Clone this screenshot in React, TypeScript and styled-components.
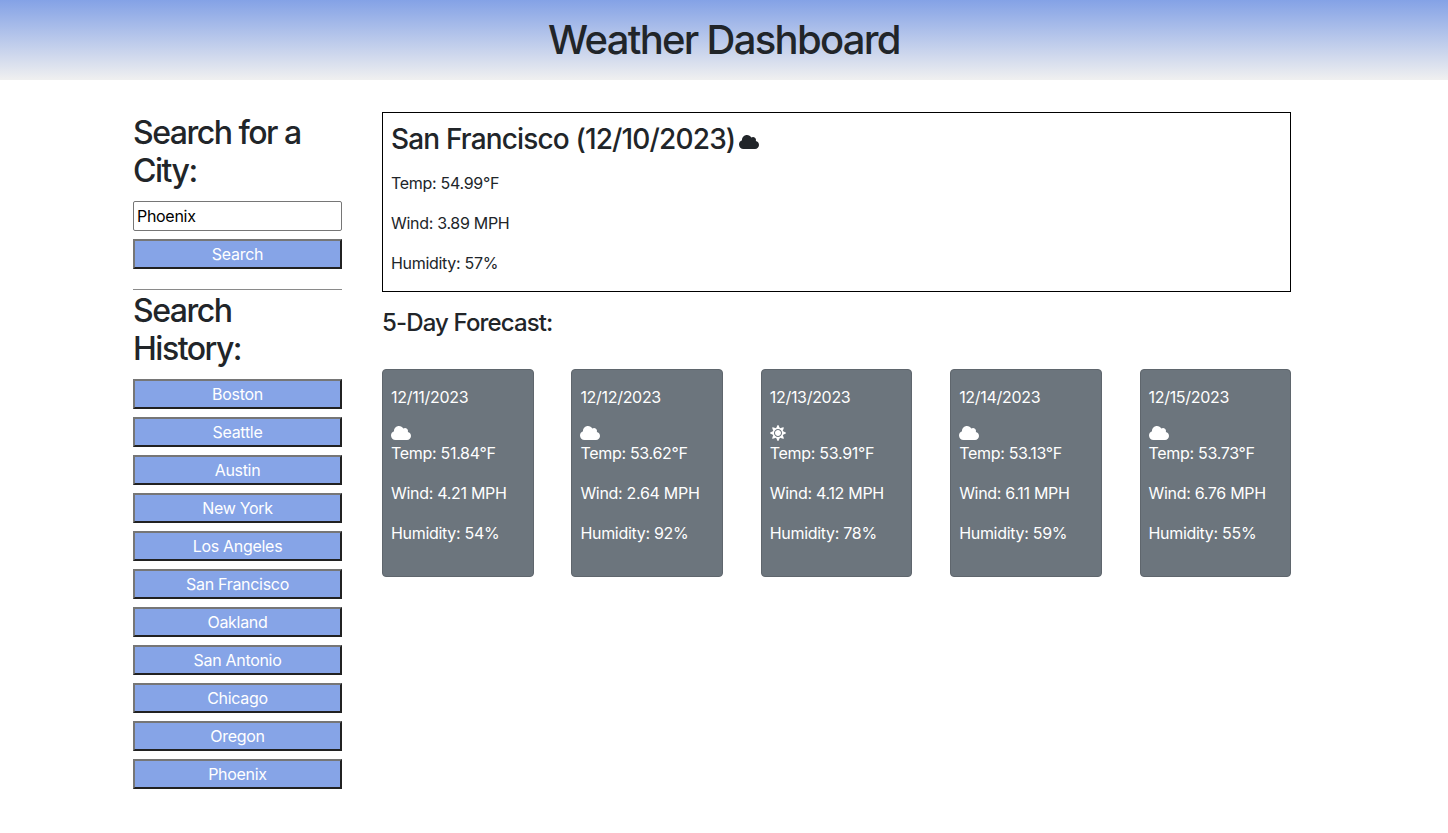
import React from 'react';
import styled, { createGlobalStyle } from 'styled-components';
import { FaCloud, FaSun } from 'react-icons/fa';

const GlobalStyle = createGlobalStyle`
    * {
        box-sizing: border-box;
    }
    body {
        margin: 0;
        background: #fff;
        color: #212529;
        font-family: Inter, "Liberation Sans", sans-serif;
        font-size: 16px;
        line-height: 1.5;
        letter-spacing: -0.3px;
    }
`

const Header = styled.header`
    height: 80px;
    display: flex;
    justify-content: center;
    align-items: center;
    background: linear-gradient(#84a2e6, #f0f0f0);
`

const Title = styled.h1`
    margin: 0;
    font-size: 40px;
    font-weight: 500;
    line-height: 1.2;
    letter-spacing: -1.7px;
`

const Page = styled.div`
    display: flex;
    gap: 40px;
    padding: 32px 0 0 133px;
`

const Sidebar = styled.aside`
    width: 209px;
    flex-shrink: 0;
    display: flex;
    flex-direction: column;
    padding-top: 2px;
`

const SideHeading = styled.h3`
    margin: 0 0 10px;
    font-size: 32px;
    font-weight: 500;
    line-height: 1.2;
    letter-spacing: -1.5px;
`

const CityInput = styled.input`
    height: 30px;
    width: 100%;
    padding: 0 3px;
    border: 1px solid #767676;
    border-radius: 2px;
    color: #000;
    font: inherit;
    letter-spacing: inherit;
    margin-bottom: 8px;
`

const SideButton = styled.button`
    height: 30px;
    width: 100%;
    flex-shrink: 0;
    padding: 0;
    border-width: 2px;
    border-style: solid;
    border-color: #767676 #212121 #212121 #767676;
    background: #86a4e7;
    color: #fff;
    font: inherit;
    letter-spacing: inherit;
    margin-bottom: 8px;
`

const Divider = styled.hr`
    width: 100%;
    margin: 12px 0 2px;
    border: 0;
    border-top: 1px solid #8a8a8a;
`

const Main = styled.main`
    width: 909px;
    flex-shrink: 0;
`

const CurrentBox = styled.section`
    height: 180px;
    padding: 10px 8px 0;
    border: 1px solid #000;
`

const CurrentTitle = styled.h2`
    margin: 0 0 14px;
    font-size: 28px;
    font-weight: 500;
    line-height: 1.2;
    letter-spacing: -0.85px;

    svg {
        font-size: 20px;
        margin-left: -3px;
        vertical-align: -3px;
    }
`

const Stat = styled.p`
    margin: 0 0 16px;
`

const ForecastHeading = styled.h4`
    margin: 17px 0 31px;
    font-size: 24px;
    font-weight: 500;
    line-height: 1.2;
    letter-spacing: -0.87px;
`

const CardRow = styled.div`
    display: flex;
    justify-content: space-between;
`

const Card = styled.div`
    width: 151.5px;
    height: 208px;
    padding: 15px 8px;
    border: 1px solid #5f666d;
    border-radius: 4px;
    background: #6c757d;
    color: #fff;
`

const CardIcon = styled.div`
    height: 16px;
    display: flex;
    align-items: center;
`

const history = [
    'Boston',
    'Seattle',
    'Austin',
    'New York',
    'Los Angeles',
    'San Francisco',
    'Oakland',
    'San Antonio',
    'Chicago',
    'Oregon',
    'Phoenix',
]

const forecast = [
    { date: '12/11/2023', sunny: false, temp: '51.84', wind: '4.21', humidity: 54 },
    { date: '12/12/2023', sunny: false, temp: '53.62', wind: '2.64', humidity: 92 },
    { date: '12/13/2023', sunny: true, temp: '53.91', wind: '4.12', humidity: 78 },
    { date: '12/14/2023', sunny: false, temp: '53.13', wind: '6.11', humidity: 59 },
    { date: '12/15/2023', sunny: false, temp: '53.73', wind: '6.76', humidity: 55 },
]

function App() {
    return (
        <>
            <GlobalStyle />
            <Header>
                <Title>Weather Dashboard</Title>
            </Header>

            <Page>
                <Sidebar>
                    <SideHeading>Search for a City:</SideHeading>
                    <CityInput defaultValue="Phoenix" />
                    <SideButton>Search</SideButton>
                    <Divider />
                    <SideHeading>Search History:</SideHeading>
                    {history.map((city) => (
                        <SideButton key={city}>{city}</SideButton>
                    ))}
                </Sidebar>

                <Main>
                    <CurrentBox>
                        <CurrentTitle>San Francisco (12/10/2023) <FaCloud /></CurrentTitle>
                        <Stat>Temp: 54.99°F</Stat>
                        <Stat>Wind: 3.89 MPH</Stat>
                        <Stat>Humidity: 57%</Stat>
                    </CurrentBox>

                    <ForecastHeading>5-Day Forecast:</ForecastHeading>

                    <CardRow>
                        {forecast.map((day) => (
                            <Card key={day.date}>
                                <Stat>{day.date}</Stat>
                                <CardIcon>{day.sunny ? <FaSun /> : <FaCloud size={20} />}</CardIcon>
                                <Stat>Temp: {day.temp}°F</Stat>
                                <Stat>Wind: {day.wind} MPH</Stat>
                                <Stat>Humidity: {day.humidity}%</Stat>
                            </Card>
                        ))}
                    </CardRow>
                </Main>
            </Page>
        </>
    );
}

export default App;
